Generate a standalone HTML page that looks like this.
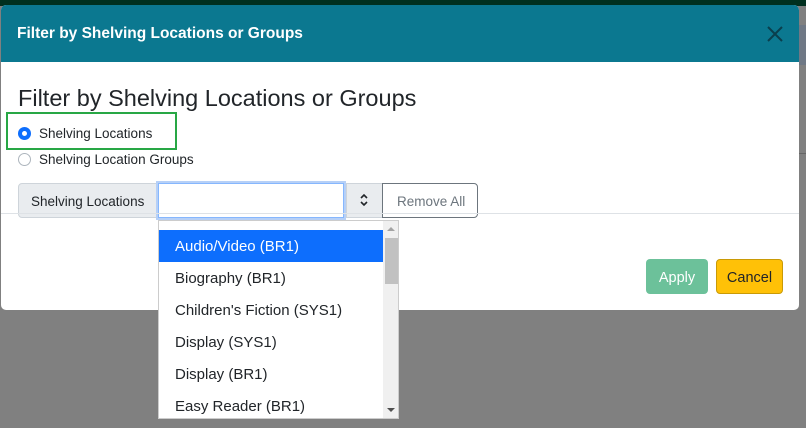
<!DOCTYPE html>
<html><head><style>
*{box-sizing:border-box;margin:0;padding:0}
body{width:806px;height:428px;overflow:hidden;background:#808080;font-family:"Liberation Sans",sans-serif;position:relative}
.a{position:absolute}
.topbar{left:0;top:0;width:806px;height:6px;background:#00301f}
.modal{left:1px;top:5px;width:798px;height:305px;background:#fff;border-radius:5px;overflow:hidden}
.hdr{left:0;top:0;width:798px;height:57px;background:#0b7890}
.item{position:absolute;left:0;width:225px;height:32px;line-height:33px;padding-left:16px;font-size:15px;color:#212529;white-space:nowrap}
.btn{display:flex;align-items:center;justify-content:center;font-size:14.5px}
</style></head><body>
<div class="a topbar"></div>
<div class="a" style="left:799px;top:25px;width:7px;height:40px;background:#6f7885"></div>
<div class="a" style="left:799px;top:153px;width:7px;height:1px;background:#666"></div>
<div class="a modal">
  <div class="a hdr"></div>
  <div class="a" style="left:16px;top:20px;color:#fff;font-weight:bold;font-size:15.5px">Filter by Shelving Locations or Groups</div>
  <svg class="a" style="left:766px;top:21px" width="16" height="16"><path d="M1 1L15 15M15 1L1 15" stroke="#0a3f4d" stroke-width="2"/></svg>
  <div class="a" style="left:17px;top:80px;font-size:23.5px;color:#212529">Filter by Shelving Locations or Groups</div>
  <div class="a" style="left:5px;top:107px;width:171px;height:38px;border:2px solid #28a745"></div>
  <div class="a" style="left:17px;top:122px;width:13px;height:13px;border-radius:50%;background:#0d6efd"></div>
  <div class="a" style="left:21px;top:126px;width:5px;height:5px;border-radius:50%;background:#fff"></div>
  <div class="a" style="left:38px;top:121px;font-size:13.5px;color:#212529">Shelving Locations</div>
  <div class="a" style="left:17px;top:148px;width:13px;height:13px;border-radius:50%;border:1px solid #adb5bd"></div>
  <div class="a" style="left:38px;top:147px;font-size:13.5px;color:#212529">Shelving Location Groups</div>
  <div class="a" style="left:17px;top:178px;width:142px;height:35px;background:#e9ecef;border:1px solid #ced4da;border-radius:4px 0 0 4px;font-size:13.5px;color:#212529;padding:10px 0 0 12px">Shelving Locations</div>
  <div class="a" style="left:155px;top:176px;width:190px;height:39px;border:3px solid #b6d0f7;background:#fff"></div>
  <div class="a" style="left:157px;top:178px;width:186px;height:35px;border:1px solid #86b7fe"></div>
  <div class="a" style="left:345px;top:178px;width:37px;height:35px;background:#e9ecef;border:1px solid #ced4da"></div>
  <svg class="a" style="left:358px;top:187px" width="10" height="16"><path d="M2 6L5 3L8 6M2 10L5 13L8 10" stroke="#212529" stroke-width="1.6" fill="none"/></svg>
  <div class="a" style="left:381px;top:178px;width:96px;height:35px;border:1px solid #6c757d;border-radius:0 4px 4px 0;font-size:13.5px;color:#6c757d;padding:10px 0 0 14px">Remove All</div>
  <div class="a" style="left:0;top:208px;width:798px;height:1px;background:#dee2e6"></div>
  <div class="a btn" style="left:645px;top:254px;width:62px;height:35px;background:#6cc19a;border-radius:4px;color:#fff;padding-top:2px">Apply</div>
  <div class="a btn" style="left:715px;top:254px;width:67px;height:35px;background:#ffc107;border:1px solid #c99a06;border-radius:4px;color:#212529;padding-top:2px">Cancel</div>
</div>
<div class="a" style="left:158px;top:220px;width:241px;height:199px;background:#fff;border:1px solid #ccc;overflow:hidden">
  <div class="item" style="top:9px;background:#0d6efd;color:#fff">Audio/Video (BR1)</div>
  <div class="item" style="top:41px">Biography (BR1)</div>
  <div class="item" style="top:73px">Children's Fiction (SYS1)</div>
  <div class="item" style="top:105px">Display (SYS1)</div>
  <div class="item" style="top:137px">Display (BR1)</div>
  <div class="item" style="top:169px">Easy Reader (BR1)</div>
  <div class="a" style="left:224px;top:0;width:17px;height:199px;background:#f0f0f0"></div>
  <div class="a" style="left:226px;top:17px;width:13px;height:46px;background:#c1c1c1"></div>
  <svg class="a" style="left:227px;top:5px" width="10" height="6"><path d="M1 5L5 1L9 5Z" fill="#a3a3a3"/></svg>
  <svg class="a" style="left:227px;top:186px" width="10" height="6"><path d="M1 1L5 5L9 1Z" fill="#505050"/></svg>
</div>
</body></html>
